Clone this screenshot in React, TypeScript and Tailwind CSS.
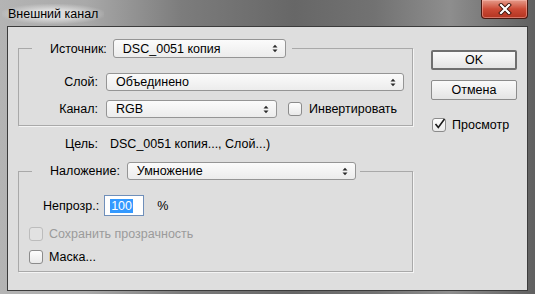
import React from 'react'

const font = "font-['Liberation_Sans',Arial,sans-serif]"

const Arrows = () => (
  <svg width="6" height="9" viewBox="0 0 6 9" className="shrink-0">
    <path d="M0.5 3.5 L3 0.8 L5.5 3.5Z M0.5 5.5 L3 8.2 L5.5 5.5Z" fill="#2a2a2a" />
  </svg>
)

const Select = ({ value, className }: { value: string; className: string }) => (
  <div
    className={`flex items-center justify-between pl-[9px] pr-[7px] border border-[#959595] rounded-[3px] bg-gradient-to-b from-[#fbfbfb] to-[#ececec] text-black ${className}`}
  >
    <span>{value}</span>
    <Arrows />
  </div>
)

const Checkbox = ({ checked, disabled }: { checked?: boolean; disabled?: boolean }) => (
  <div
    className={`relative w-[14px] h-[14px] rounded-[3px] border shrink-0 ${
      disabled
        ? 'border-[#bcbcbc] bg-[#e2e2e2]'
        : 'border-[#8b8b8b] bg-gradient-to-b from-[#fdfdfd] to-[#e9e9e9]'
    }`}
  >
    {checked && (
      <svg width="14" height="14" viewBox="0 0 14 14" className="absolute left-[0px] top-[-2px]">
        <path d="M2.5 7 L5.3 10.5 L11.5 2" stroke="#1a1a1a" strokeWidth="1.6" fill="none" />
      </svg>
    )}
  </div>
)

const Button = ({ label, primary }: { label: string; primary?: boolean }) => (
  <div
    className={`w-[86px] h-[20px] flex items-center justify-center rounded-[2px] bg-gradient-to-b from-[#fafafa] to-[#e4e4e4] text-black ${
      primary ? 'border-2 border-[#6f6f6f]' : 'border border-[#8c8c8c]'
    }`}
  >
    {label}
  </div>
)

export default function App() {
  return (
    <div
      className={`w-[535px] h-[294px] overflow-hidden bg-[linear-gradient(90deg,#b4b4b4_0%,#a9a9a9_16%,#7c7c7c_34%,#676767_55%,#727272_70%,#8e8e8e_84%,#606060_100%)] ${font}`}
    >
      {/* title bar */}
      <div className="h-[26px] flex items-start">
        <span className="ml-[2px] mt-[4px] px-[6px] py-[2px] text-[12.5px] leading-[16px] text-black bg-[radial-gradient(ellipse_at_center,rgba(225,225,225,0.9)_30%,rgba(225,225,225,0)_75%)]">
          Внешний канал
        </span>
        <div className="ml-auto mr-[7px] w-[47px] h-[19px] flex items-center justify-center rounded-b-[4px] border border-t-0 border-[#4a1810] bg-gradient-to-b from-[#e49a8a] via-[#cc4a36] to-[#b3331f] shadow-[inset_0_0_0_1px_rgba(255,200,190,0.45)]">
          <svg width="14" height="12" viewBox="0 0 14 12">
            <path d="M3 2 L11 10 M11 2 L3 10" stroke="#3b1209" strokeWidth="4" strokeLinecap="square" />
            <path d="M3 2 L11 10 M11 2 L3 10" stroke="#ffffff" strokeWidth="2.2" strokeLinecap="square" />
          </svg>
        </div>
      </div>

      {/* client area */}
      <div className="mx-[7px] h-[265px] border border-[#3c3c3c] bg-[#dedede] flex text-[12.5px] leading-[14px] text-black">
        {/* left column */}
        <div className="pl-[10px] pt-[12px] w-[405px] flex flex-col">
          <fieldset className="w-[395px] border border-[#a9a9a9] shadow-[1px_1px_0_#f4f4f4] pb-[7px]">
            <legend className="ml-[13px] pl-[18px] pr-[6px] flex items-center">
              <span className="mr-[6px]">Источник:</span>
              <Select value="DSC_0051 копия" className="w-[173px] h-[19px]" />
            </legend>
            <div className="mt-[15px] flex items-center">
              <span className="w-[79px] text-right">Слой:</span>
              <Select value="Объединено" className="ml-[8px] w-[298px] h-[18px]" />
            </div>
            <div className="mt-[9px] flex items-center">
              <span className="w-[79px] text-right">Канал:</span>
              <Select value="RGB" className="ml-[8px] w-[171px] h-[18px]" />
              <div className="ml-[11px]">
                <Checkbox />
              </div>
              <span className="ml-[7px]">Инвертировать</span>
            </div>
          </fieldset>

          <div className="mt-[11px] flex items-center h-[14px]">
            <span className="w-[80px] text-right">Цель:</span>
            <span className="ml-[12px]">DSC_0051 копия..., Слой...)</span>
          </div>

          <fieldset className="mt-[11px] w-[395px] border border-[#a9a9a9] shadow-[1px_1px_0_#f4f4f4] pb-[7px]">
            <legend className="ml-[13px] pl-[18px] pr-[4px] flex items-center">
              <span className="mr-[7px]">Наложение:</span>
              <Select value="Умножение" className="w-[229px] h-[18px]" />
            </legend>
            <div className="mt-[15px] pl-[24px] flex items-center">
              <span>Непрозр.:</span>
              <div className="ml-[5px] w-[40px] h-[21px] border border-[#6f8fba] bg-white flex items-center pl-[5px]">
                <span className="bg-[#3399ff] text-white leading-[14px] px-[1px]">100</span>
              </div>
              <span className="ml-[13px]">%</span>
            </div>
            <div className="mt-[11px] pl-[10px] flex items-center">
              <Checkbox disabled />
              <span className="ml-[6px] text-[#9b9b9b]">Сохранить прозрачность</span>
            </div>
            <div className="mt-[9px] pl-[10px] flex items-center">
              <Checkbox />
              <span className="ml-[6px]">Маска...</span>
            </div>
          </fieldset>
        </div>

        {/* right column */}
        <div className="ml-[18px] pt-[23px] flex flex-col">
          <Button label="OK" primary />
          <div className="mt-[10px]">
            <Button label="Отмена" />
          </div>
          <div className="mt-[18px] ml-[1px] flex items-center">
            <Checkbox checked />
            <span className="ml-[6px]">Просмотр</span>
          </div>
        </div>
      </div>
    </div>
  )
}
